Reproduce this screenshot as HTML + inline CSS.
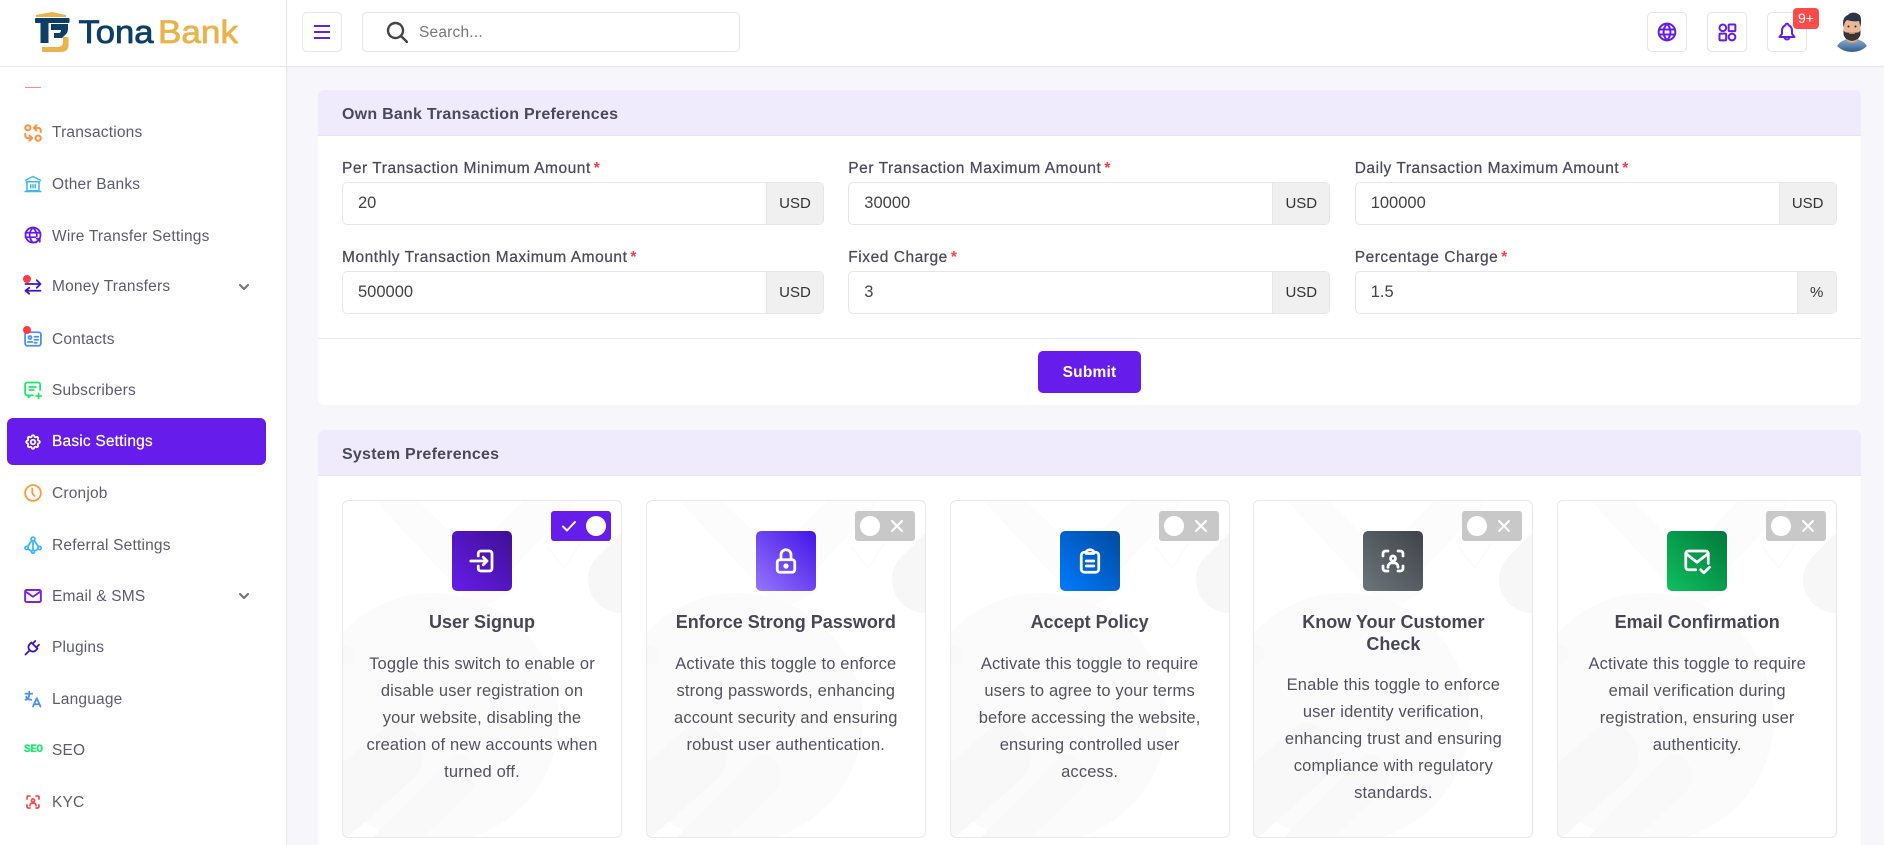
<!DOCTYPE html>
<html lang="en"><head><meta charset="utf-8"><title>TonaBank</title>
<style>
*{box-sizing:border-box}
html,body{margin:0;padding:0}
body{width:1884px;height:845px;overflow:hidden;position:relative;background:#f6f6fb;font-family:"Liberation Sans",Arial,sans-serif;color:#4b4b5a}
.abs,.nav,.nav svg,.lbl,.ig,.btn,.fc,.tg{position:absolute}
#side{position:absolute;left:0;top:66px;width:287px;height:779px;background:#fff;border-right:1px solid #e4e4e8}
#top{position:absolute;left:0;top:0;width:1884px;height:67px;background:#fff;border-bottom:1px solid #e4e4e8}
#top:before{content:"";position:absolute;left:286px;top:0;width:1px;height:66px;background:#e4e4e8}
.nav{left:52px;font-size:15.5px;letter-spacing:.19px;line-height:22px;color:#5c5c6e;white-space:nowrap}
.ni{position:absolute;left:24px;width:18px;height:18px;fill:none;stroke-width:2.4;stroke-linecap:round;stroke-linejoin:round}
.dot{position:absolute;left:23px;width:8px;height:8px;border-radius:50%;background:#ff3b46}
.chev{position:absolute;left:238px;width:12px;height:12px;fill:none;stroke:#777;stroke-width:2.2;stroke-linecap:round;stroke-linejoin:round}
#act{position:absolute;left:7px;top:418px;width:259px;height:47px;background:#661cea;border-radius:6px}
.btn{top:12px;width:40px;height:40px;border:1px solid #e5e5ea;border-radius:5px;background:#fff}
.btn svg{position:absolute;left:9px;top:9px;width:20px;height:20px;fill:none;stroke:#661cea;stroke-width:2.4;stroke-linecap:round;stroke-linejoin:round}
.card{position:absolute;left:318px;width:1543px;background:#fff;border-radius:6px;overflow:hidden}
.ch{height:46px;background:#efebfc;border-bottom:1px solid #e6e4ee;padding-left:24px;font-weight:700;font-size:16px;letter-spacing:.24px;line-height:49px;color:#48485a}
.lbl{font-size:15.5px;letter-spacing:.54px;line-height:20px;color:#4b4b5a;white-space:nowrap;-webkit-text-stroke:.25px #4b4b5a}
.lbl b{color:#ff3b4a;font-weight:700;margin-left:3px;letter-spacing:0;-webkit-text-stroke:0}
.ig{width:482px;height:42.5px;border:1px solid #e6e6ea;border-radius:5px;background:#fff;overflow:hidden;font-size:16.5px;line-height:40px;color:#444;padding-left:15px}
.ig i{position:absolute;right:0;top:0;bottom:0;background:#f0f0f0;border-left:1px solid #e6e6ea;font-style:normal;font-size:15px;line-height:42px;color:#333;text-align:center}
.fc{top:500px;width:280px;height:337.5px;border:1px solid #e8e8ea;border-radius:6px;background:#fff;overflow:hidden;text-align:center}
.fc>svg.bg{position:absolute;left:-1px;top:-1px;width:280px;height:338px}
.tg{right:10px;top:10px;width:60px;height:30px;border-radius:3px;background:#c8c8c8}
.tg.on{background:#661cea}
.tg s{position:absolute;top:5px;width:20px;height:20px;border-radius:50%;background:#fff;left:5px}
.tg.on s{left:35px}
.tg svg{position:absolute;top:8px;left:35px;width:14px;height:14px;fill:none;stroke:#fff;stroke-width:2;stroke-linecap:round;stroke-linejoin:round}
.tg.on svg{left:11px}
.ic{position:absolute;left:109px;top:30px;width:60px;height:60px;border-radius:5px}
.ic svg{position:absolute;left:15px;top:15px;width:30px;height:30px;fill:none;stroke:#fff;stroke-width:2.2;stroke-linecap:round;stroke-linejoin:round}
.t{position:absolute;left:20px;right:20px;top:110px;font-weight:700;font-size:18px;line-height:22px;color:#464655}
.d{position:absolute;left:12px;right:12px;top:150px;font-size:16.5px;letter-spacing:.15px;line-height:27.1px;color:#52525f}
</style></head><body>
<svg width="0" height="0" style="position:absolute"><defs>
<symbol id="pat" viewBox="0 0 280 338">
<polygon points="33,0 75,0 170,92 135,110" fill="#fcfcfc"/>
<polygon points="182,0 235,0 170,70 135,48" fill="#fcfcfc"/>
<circle cx="92" cy="218" r="125" fill="#fbfbfb"/>
<path d="M246 80a33 33 0 0 1 10-24L290 22V113H279a33 33 0 0 1-33-33z" fill="#f7f7f7"/>
<path d="M48 222a33 33 0 0 1 24 56L5 338H-5V268z" fill="#f8f8f8"/>
<path d="M113 254a22 22 0 0 1 16 37L80 338H30z" fill="#f9f9f9"/>
<circle cx="2" cy="155" r="10" fill="#f9f9f9"/>
<polyline points="205,46 222,68 238,44" fill="none" stroke="#fbfbfb" stroke-width="1.500"/>
</symbol>
<symbol id="face" viewBox="0 0 24 24"><path d="M4 8V6a2 2 0 0 1 2-2h2M4 16v2a2 2 0 0 0 2 2h2M16 4h2a2 2 0 0 1 2 2v2M16 20h2a2 2 0 0 0 2-2v-2"/><circle cx="12" cy="10" r="2"/><path d="M8 17v-.5a3 3 0 0 1 3-3h2a3 3 0 0 1 3 3v.5"/></symbol>
</defs></svg>

<div id="side">
<div class="abs" style="left:25px;top:21px;width:16px;height:1px;background:#ff8a8a"></div>
</div>
<div id="act"></div>

<svg class="ni" style="top:124px;stroke:#ff9340" viewBox="1.500 1.500 21 21"><circle cx="6" cy="6" r="3"/><circle cx="18" cy="18" r="3"/><path d="M21 11V9a3 3 0 0 0-3-3h-5m3 3-3-3 3-3M3 13v2a3 3 0 0 0 3 3h5m-3-3 3 3-3 3"/></svg>
<div class="nav" style="top:122px">Transactions</div>
<svg class="ni" style="top:175px;stroke:#3cb8fa;stroke-width:2" viewBox="0 0 24 24"><path d="M2 7 12 2l10 5M3 9h18M4 9v12h16V9M1.500 22h21M9 13v4M12 13v4M15 13v4"/></svg>
<div class="nav" style="top:174px">Other Banks</div>
<svg class="ni" style="top:226px;stroke:#661cea" viewBox="0 0 24 24"><circle cx="12" cy="12" r="10"/><path d="M2 9h20M2 15h13M12 2c-6 6-6 14 0 20M12 2c4 4 5.500 8 5 12"/><path d="M16 22l5-5m-4 0h4v4"/></svg>
<div class="nav" style="top:226px">Wire Transfer Settings</div>
<svg class="ni" style="top:278px;stroke:#4512c4" viewBox="0 0 24 24"><path d="M2 8h20m-5-5 5 5-5 5M22 17H2m5-4-5 4 5 4"/></svg>
<div class="dot" style="top:275px"></div>
<div class="nav" style="top:276px">Money Transfers</div>
<svg class="chev" style="top:281px" viewBox="0 0 12 12"><path d="M2 4l4 4 4-4"/></svg>
<svg class="ni" style="top:330px;stroke:#4a90f5" viewBox="0 0 24 24"><rect x="1.500" y="3" width="21" height="18" rx="3"/><circle cx="8" cy="10" r="2"/><path d="M5 16h6M14 9h5M14 13h5M14 17h3"/></svg>
<div class="dot" style="top:326px"></div>
<div class="nav" style="top:329px">Contacts</div>
<svg class="ni" style="top:381px;stroke:#1ee86b" viewBox="0 0 24 24"><path d="M12 19H9l-3 3v-3H4a2.500 2.500 0 0 1-2.500-2.500v-12A2.500 2.500 0 0 1 4 2h15a2.500 2.500 0 0 1 2.500 2.500V12M7 8h9M7 12h6M16 20h7M19.500 16.500v7"/></svg>
<div class="nav" style="top:380px">Subscribers</div>
<svg class="ni" style="top:432.500px;stroke:#fff" viewBox="0 0 24 24"><path d="M10.325 4.317c.426-1.756 2.924-1.756 3.35 0a1.724 1.724 0 0 0 2.573 1.066c1.543-.94 3.31.826 2.37 2.37a1.724 1.724 0 0 0 1.065 2.572c1.756.426 1.756 2.924 0 3.35a1.724 1.724 0 0 0-1.066 2.573c.94 1.543-.826 3.31-2.37 2.37a1.724 1.724 0 0 0-2.572 1.065c-.426 1.756-2.924 1.756-3.35 0a1.724 1.724 0 0 0-2.573-1.066c-1.543.94-3.31-.826-2.37-2.37a1.724 1.724 0 0 0-1.065-2.572c-1.756-.426-1.756-2.924 0-3.35a1.724 1.724 0 0 0 1.066-2.573c-.94-1.543.826-3.31 2.37-2.37c1 .608 2.296.07 2.572-1.065z"/><circle cx="12" cy="12" r="3"/></svg>
<div class="nav" style="top:431px;color:#fff;-webkit-text-stroke:.2px #fff">Basic Settings</div>
<svg class="ni" style="top:484px;stroke:#ff9a40" viewBox="0 0 24 24"><circle cx="12" cy="12" r="10.500"/><path d="M11 6v6l3 4"/></svg>
<div class="nav" style="top:483px">Cronjob</div>
<svg class="ni" style="top:535.500px;stroke:#3cb8fa" viewBox="0 0 24 24"><circle cx="12" cy="4" r="2.500"/><circle cx="3.500" cy="16" r="2.200"/><circle cx="20.500" cy="16" r="2.200"/><circle cx="12" cy="21" r="2"/><path d="M12 7v12M10 6.500 5 14M14 6.500l5 7.500M5.500 17.500 10 20M18.500 17.500 14 20"/></svg>
<div class="nav" style="top:535px">Referral Settings</div>
<svg class="ni" style="top:587px;stroke:#7a22ee;stroke-width:2.600" viewBox="0 0 24 24"><rect x="1.500" y="4" width="21" height="16" rx="2"/><path d="m2 6 10 7 10-7"/></svg>
<div class="nav" style="top:586px">Email &amp; SMS</div>
<svg class="chev" style="top:590px" viewBox="0 0 12 12"><path d="M2 4l4 4 4-4"/></svg>
<svg class="ni" style="top:638px;stroke:#4512c4" viewBox="0 0 24 24"><path d="M9.785 6l8.215 8.215-2.054 2.054a5.810 5.810 0 1 1-8.215-8.215L9.785 6z"/><path d="M2 22l5.500-5.500M15 4l-3.500 3.500M20 9l-3.500 3.500"/></svg>
<div class="nav" style="top:637px">Plugins</div>
<svg class="ni" style="top:690px;stroke:#4a90f5" viewBox="0 0 24 24"><path d="M2 5h9M7 2v3c0 4.418-2.239 8-5 8M3 9c0 2.144 2.952 3.908 6.700 4M12 22l5-11 5 11M20.800 19h-7.600"/></svg>
<div class="nav" style="top:689px">Language</div>
<div class="abs" style="left:24px;top:743px;width:20px;font:700 11px/14px 'Liberation Mono',monospace;letter-spacing:-.4px;color:#1ee86b;-webkit-text-stroke:.3px #1ee86b">SEO</div>
<div class="nav" style="top:740px">SEO</div>
<svg class="ni" style="top:793px;stroke:#ff4a4a" viewBox="0 0 24 24"><use href="#face"/></svg>
<div class="nav" style="top:792px">KYC</div>

<div id="top">
<svg class="abs" style="left:34px;top:10px" width="38" height="44" viewBox="34 10 38 44">
<path d="M36 17v-2l16-3 14 3v2z" fill="#e9b44c"/>
<rect x="35" y="18" width="34.500" height="5" rx="1" fill="#0d3f66"/>
<rect x="40.500" y="23" width="8" height="20" fill="#0d3f66"/>
<path d="M51 24h17v5q0 4-4 7l-2 2h-8v-5h5.500q1.500-1 1.500-3H51z" fill="#0d3f66"/>
<path d="M42 47h15q6 0 6-5v-5h5.500v8q0 7-8 7H42z" fill="#e9b44c"/>
</svg>
<svg class="abs" style="left:74px;top:10px" width="170" height="44">
<text x="4.500" y="33" font-family="'Liberation Sans',sans-serif" font-size="32" fill="#0d3f66" stroke="#0d3f66" stroke-width=".8" textLength="75" lengthAdjust="spacingAndGlyphs">Tona</text>
<text x="84" y="33" font-family="'Liberation Sans',sans-serif" font-size="32" fill="#e9b44c" stroke="#e9b44c" stroke-width=".8" textLength="80" lengthAdjust="spacingAndGlyphs">Bank</text>
</svg>
<div class="btn" style="left:302px"><svg style="stroke-width:2" viewBox="0 0 20 20"><path d="M2 4h16M2 10h16M2 16h16" stroke-linecap="butt"/></svg></div>
<div class="btn" style="left:362px;width:378px"><svg style="left:23px;width:22px;height:22px;top:8px;stroke:#444" viewBox="0 0 22 22"><circle cx="9.500" cy="9.500" r="7.500"/><path d="M15 15l6 6"/></svg></div>
<div class="abs" style="left:419px;top:23px;font-size:15.500px;letter-spacing:.2px;line-height:20px;color:#777">Search...</div>
<div class="btn" style="left:1647px"><svg viewBox="0 0 24 24"><circle cx="12" cy="12" r="10"/><path d="M2.500 9h19M2.500 15h19M12 2c-5.500 6-5.500 14 0 20M12 2c5.500 6 5.500 14 0 20"/></svg></div>
<div class="btn" style="left:1707px"><svg viewBox="0 0 24 24"><circle cx="7" cy="7" r="4"/><rect x="14" y="3" width="8" height="8" rx="1"/><rect x="3" y="14" width="8" height="8" rx="1"/><circle cx="18" cy="18" r="4"/></svg></div>
<div class="btn" style="left:1767px"><svg viewBox="0 0 24 24"><path d="M10 4a2 2 0 1 1 4 0 7 7 0 0 1 4 6v4l3 4H3l3-4v-4a7 7 0 0 1 4-6M9 18a3 3 0 0 0 6 0"/></svg></div>
<div class="abs" style="left:1793px;top:8px;width:26px;height:21px;border-radius:4px;background:#ff4a4a;color:#fff;font-size:14px;line-height:21px;text-align:center">9+</div>
<svg class="abs" style="left:1836px;top:11px" width="32" height="42" viewBox="0 0 32 42">
<defs><linearGradient id="sh" x1="0" y1="0" x2="0" y2="1"><stop offset="0" stop-color="#8fb0d2"/><stop offset="1" stop-color="#2f5c8c"/></linearGradient></defs>
<path d="M1 35q3-5 10-7h10q7 2 10 7-6 6-15 6T1 35z" fill="url(#sh)"/>
<path d="M11 22h10v8q-5 4-10 0z" fill="#d9a07f"/>
<path d="M7.500 9h17v13q-1 8-8.500 9-7.500-1-8.500-9z" fill="#eab896"/>
<path d="M7.500 19c1 2.500 3 3 8.500 2.500 5.500 .5 7.500 0 8.500-2.500v4q-1 6-8.500 7-7.500-1-8.500-7z" fill="#3a3433"/>
<rect x="13" y="21.500" width="6" height="1.500" rx=".7" fill="#c98a70"/>
<path d="M7.500 16c-1.500-7 1-11 4.500-12 2-3 8-3 10-1 3.500 1 3.500 7 2.500 13l-1.500-6q-6 1-12-1l-2 2z" fill="#2c3648"/>
<circle cx="12.500" cy="15.500" r="1" fill="#2a2a2a"/><circle cx="19.500" cy="15.500" r="1" fill="#2a2a2a"/>
</svg>
</div>

<div class="card" style="top:90px;height:315px">
<div class="ch">Own Bank Transaction Preferences</div>
<div class="abs" style="left:0;right:0;top:248px;height:1px;background:#e8e8ec"></div>
<div class="abs" style="left:720px;top:261px;width:103px;height:42px;background:#661cea;border-radius:5px;color:#fff;font-weight:700;font-size:15.500px;letter-spacing:.2px;line-height:44px;text-align:center">Submit</div>
</div>

<div class="lbl" style="left:342px;top:159px">Per Transaction Minimum Amount<b>*</b></div>
<div class="ig" style="left:342px;top:182px">20<i style="width:57px">USD</i></div>
<div class="lbl" style="left:848.300px;top:159px">Per Transaction Maximum Amount<b>*</b></div>
<div class="ig" style="left:848.300px;top:182px">30000<i style="width:57px">USD</i></div>
<div class="lbl" style="left:1354.700px;top:159px">Daily Transaction Maximum Amount<b>*</b></div>
<div class="ig" style="left:1354.700px;top:182px">100000<i style="width:57px">USD</i></div>
<div class="lbl" style="left:342px;top:248px">Monthly Transaction Maximum Amount<b>*</b></div>
<div class="ig" style="left:342px;top:271px">500000<i style="width:57px">USD</i></div>
<div class="lbl" style="left:848.300px;top:248px">Fixed Charge<b>*</b></div>
<div class="ig" style="left:848.300px;top:271px">3<i style="width:57px">USD</i></div>
<div class="lbl" style="left:1354.700px;top:248px">Percentage Charge<b>*</b></div>
<div class="ig" style="left:1354.700px;top:271px">1.5<i style="width:39px">%</i></div>

<div class="card" style="top:430px;height:415px;border-radius:6px 6px 0 0">
<div class="ch">System Preferences</div>
</div>

<div class="fc" style="left:342px"><svg class="bg"><use href="#pat"/></svg>
<div class="tg on"><svg viewBox="0 0 14 14"><path d="M1 7.500 5 11.500 13 3"/></svg><s></s></div>
<div class="ic" style="background:linear-gradient(45deg,#661cea,#3f0f94)"><svg viewBox="0 0 24 24"><path d="M9 8V6a2 2 0 0 1 2-2h7a2 2 0 0 1 2 2v12a2 2 0 0 1-2 2h-7a2 2 0 0 1-2-2v-2M3 12h13m-3-3 3 3-3 3"/></svg></div>
<div class="t">User Signup</div>
<div class="d">Toggle this switch to enable or<br>disable user registration on<br>your website, disabling the<br>creation of new accounts when<br>turned off.</div></div>

<div class="fc" style="left:645.800px"><svg class="bg"><use href="#pat"/></svg>
<div class="tg"><s></s><svg viewBox="0 0 14 14"><path d="M2 2l10 10M12 2 2 12"/></svg></div>
<div class="ic" style="background:linear-gradient(45deg,#9676fb,#4314e8)"><svg viewBox="0 0 24 24"><rect x="5" y="11" width="14" height="10" rx="2"/><circle cx="12" cy="16" r="1"/><path d="M8 11V7a4 4 0 0 1 8 0v4"/></svg></div>
<div class="t">Enforce Strong Password</div>
<div class="d">Activate this toggle to enforce<br>strong passwords, enhancing<br>account security and ensuring<br>robust user authentication.</div></div>

<div class="fc" style="left:949.600px"><svg class="bg"><use href="#pat"/></svg>
<div class="tg"><s></s><svg viewBox="0 0 14 14"><path d="M2 2l10 10M12 2 2 12"/></svg></div>
<div class="ic" style="background:linear-gradient(45deg,#007bff,#004a9f)"><svg viewBox="0 0 24 24"><path d="M9 5H7.500A2.500 2.500 0 0 0 5 7.500v11A2.500 2.500 0 0 0 7.500 21h9a2.500 2.500 0 0 0 2.500-2.500v-11A2.500 2.500 0 0 0 16.500 5H15"/><path d="M9 5a3 2 0 0 1 6 0v1H9zM9 12h6M9 16h6"/></svg></div>
<div class="t">Accept Policy</div>
<div class="d">Activate this toggle to require<br>users to agree to your terms<br>before accessing the website,<br>ensuring controlled user<br>access.</div></div>

<div class="fc" style="left:1253.400px"><svg class="bg"><use href="#pat"/></svg>
<div class="tg"><s></s><svg viewBox="0 0 14 14"><path d="M2 2l10 10M12 2 2 12"/></svg></div>
<div class="ic" style="background:linear-gradient(45deg,#6c757d,#3f4347)"><svg viewBox="0 0 24 24"><use href="#face"/></svg></div>
<div class="t">Know Your Customer<br>Check</div>
<div class="d" style="top:171px">Enable this toggle to enforce<br>user identity verification,<br>enhancing trust and ensuring<br>compliance with regulatory<br>standards.</div></div>

<div class="fc" style="left:1557.200px"><svg class="bg"><use href="#pat"/></svg>
<div class="tg"><s></s><svg viewBox="0 0 14 14"><path d="M2 2l10 10M12 2 2 12"/></svg></div>
<div class="ic" style="background:linear-gradient(45deg,#0fbf5f,#007a3a)"><svg viewBox="0 0 24 24"><path d="M11 19H5a2 2 0 0 1-2-2V6a2 2 0 0 1 2-2h14a2 2 0 0 1 2 2v8"/><path d="m3 6 9 7 9-7M15 19l2.500 2.500L22 17"/></svg></div>
<div class="t">Email Confirmation</div>
<div class="d">Activate this toggle to require<br>email verification during<br>registration, ensuring user<br>authenticity.</div></div>
</body></html>
